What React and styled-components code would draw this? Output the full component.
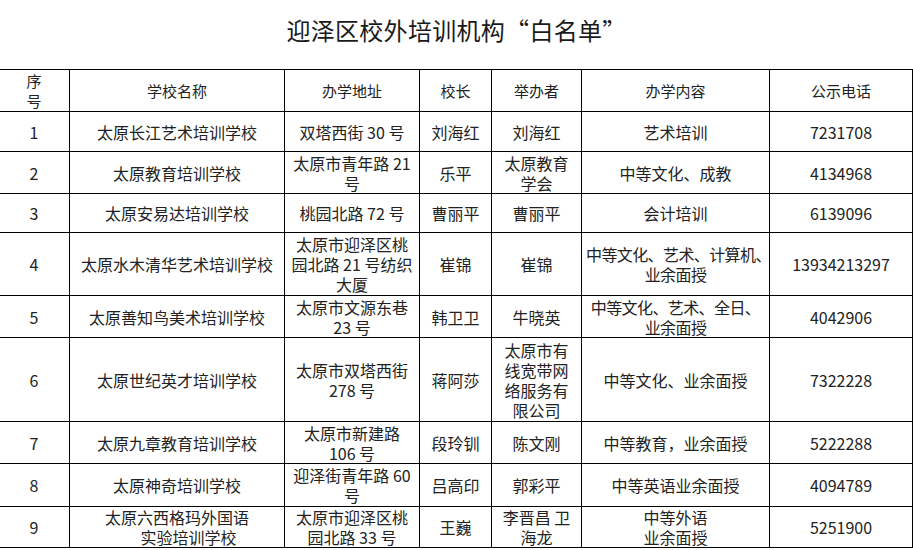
import React from 'react';
import styled, { createGlobalStyle } from 'styled-components';

const GlobalStyle = createGlobalStyle`
  html, body {
    margin: 0;
    padding: 0;
    background: #ffffff;
  }
  body {
    font-family: "Noto Sans CJK SC", "Noto Sans", sans-serif;
    color: #222222;
    overflow: hidden;
  }
`;

const Page = styled.div`
  width: 913px;
  padding-top: 15px;
`;

const Title = styled.h1`
  margin: 0 0 24px;
  font-size: 24px;
  line-height: 30px;
  font-weight: 400;
  text-align: center;
  color: #1a1a1a;
  letter-spacing: 0.3px;
`;

const Sheet = styled.table`
  width: 914px;
  margin-left: -2px;
  table-layout: fixed;
  border-collapse: collapse;
  border: 1px solid #000;
`;

const HeadCell = styled.th`
  border: 1px solid #000;
  padding: 0 4px;
  font-size: 15px;
  font-weight: 400;
  line-height: 20px;
  text-align: center;
  vertical-align: middle;
  color: #222;
`;

const Row = styled.tr`
  height: ${p => p.$h}px;
`;

const Cell = styled.td`
  border: 1px solid #000;
  padding: 0 4px;
  font-size: 16px;
  line-height: 20px;
  text-align: center;
  vertical-align: middle;
  color: #222;
  letter-spacing: ${p => (p.$tight ? '-0.6px' : '0')};
`;

const Line = styled.div`
  white-space: pre;
`;

const columns = [
  { key: 'no', label: ['序', '号'], width: 71 },
  { key: 'name', label: ['学校名称'], width: 215 },
  { key: 'addr', label: ['办学地址'], width: 135 },
  { key: 'head', label: ['校长'], width: 72 },
  { key: 'org', label: ['举办者'], width: 90 },
  { key: 'scope', label: ['办学内容'], width: 188 },
  { key: 'tel', label: ['公示电话'], width: 143 },
];

const rows = [
  { h: 40, no: '1', name: '太原长江艺术培训学校', addr: '双塔西街 30 号', head: '刘海红', org: '刘海红', scope: '艺术培训', tel: '7231708' },
  { h: 42, no: '2', name: '太原教育培训学校', addr: ['太原市青年路 21', '号'], head: '乐平', org: ['太原教育', '学会'], scope: '中等文化、成教', tel: '4134968' },
  { h: 39, no: '3', name: '太原安易达培训学校', addr: '桃园北路 72 号', head: '曹丽平', org: '曹丽平', scope: '会计培训', tel: '6139096' },
  { h: 63, no: '4', name: '太原水木清华艺术培训学校', addr: ['太原市迎泽区桃', '园北路 21 号纺织', '大厦'], head: '崔锦', org: '崔锦', scope: ['中等文化、艺术、计算机、', '业余面授'], tel: '13934213297', tight: true },
  { h: 42, no: '5', name: '太原善知鸟美术培训学校', addr: ['太原市文源东巷', '23 号'], head: '韩卫卫', org: '牛晓英', scope: ['中等文化、艺术、全日、', '业余面授'], tel: '4042906', tight: true },
  { h: 84, no: '6', name: '太原世纪英才培训学校', addr: ['太原市双塔西街', '278 号'], head: '蒋阿莎', org: ['太原市有', '线宽带网', '络服务有', '限公司'], scope: '中等文化、业余面授', tel: '7322228' },
  { h: 42, no: '7', name: '太原九章教育培训学校', addr: ['太原市新建路', '106 号'], head: '段玲钏', org: '陈文刚', scope: '中等教育，业余面授', tel: '5222288' },
  { h: 43, no: '8', name: '太原神奇培训学校', addr: ['迎泽街青年路 60', '号'], head: '吕高印', org: '郭彩平', scope: '中等英语业余面授', tel: '4094789' },
  { h: 41, no: '9', name: ['太原六西格玛外国语', '\u3000\u00a0\u00a0实验培训学校'], addr: ['太原市迎泽区桃', '园北路 33 号'], head: '王巍', org: ['李晋昌 卫', '海龙'], scope: ['中等外语', '业余面授'], tel: '5251900' },
];

function Lines({ value }) {
  const list = Array.isArray(value) ? value : [value];
  return list.map((text, i) => <Line key={i}>{text}</Line>);
}

export default function App() {
  return (
    <Page>
      <GlobalStyle />
      <Title>迎泽区校外培训机构“白名单”</Title>
      <Sheet>
        <colgroup>
          {columns.map(c => (
            <col key={c.key} style={{ width: c.width }} />
          ))}
        </colgroup>
        <thead>
          <Row $h={42}>
            {columns.map(c => (
              <HeadCell key={c.key}>
                <Lines value={c.label} />
              </HeadCell>
            ))}
          </Row>
        </thead>
        <tbody>
          {rows.map(r => (
            <Row key={r.no} $h={r.h}>
              {columns.map(c => (
                <Cell key={c.key} $tight={c.key === 'scope' && r.tight}>
                  <Lines value={r[c.key]} />
                </Cell>
              ))}
            </Row>
          ))}
        </tbody>
      </Sheet>
    </Page>
  );
}
